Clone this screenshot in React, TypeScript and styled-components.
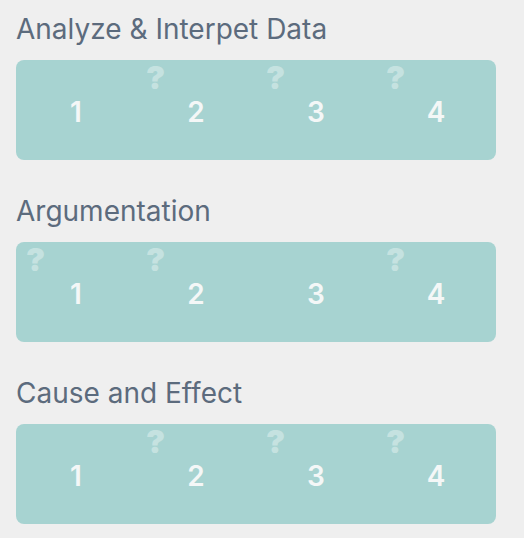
import React from "react"
import styled, {createGlobalStyle} from "styled-components"

const GlobalStyle = createGlobalStyle`
    html, body {
        margin: 0;
        padding: 0;
        background: #efefef;
    }
    body {
        font-family: Inter, "Liberation Sans", Arial, sans-serif;
    }
`

const Page = styled.div`
    display: flex;
    flex-direction: column;
    gap: 35px;
    padding: 13px 28px 0 16px;
`

const Section = styled.section`
    display: flex;
    flex-direction: column;
    gap: 15px;
`

const Title = styled.h2`
    margin: 0;
    font-size: 28px;
    line-height: 32px;
    font-weight: 400;
    color: #5c6b7d;
`

const Scale = styled.div`
    display: grid;
    grid-template-columns: repeat(4, 1fr);
    height: 100px;
    border-radius: 8px;
    background: #a7d3d1;
`

const Step = styled.div`
    position: relative;
    display: flex;
    align-items: center;
    justify-content: center;
`

const Number = styled.span`
    margin-top: 4px;
    font-size: 28px;
    line-height: 28px;
    font-weight: 600;
    color: #f4f7f7;
`

const Unknown = styled.span`
    position: absolute;
    top: 2px;
    left: 10px;
    font-size: 32px;
    line-height: 32px;
    font-weight: 900;
    color: rgba(255, 255, 255, 0.35);
`

interface Rubric {
    title: string
    unknown: boolean[]
}

const rubrics: Rubric[] = [
    {title: "Analyze & Interpet Data", unknown: [false, true, true, true]},
    {title: "Argumentation", unknown: [true, true, false, true]},
    {title: "Cause and Effect", unknown: [false, true, true, true]},
]

const App: React.FC = () => (
    <>
        <GlobalStyle />
        <Page>
            {rubrics.map(rubric => (
                <Section key={rubric.title}>
                    <Title>{rubric.title}</Title>
                    <Scale>
                        {rubric.unknown.map((unknown, i) => (
                            <Step key={i}>
                                {unknown && <Unknown>?</Unknown>}
                                <Number>{i + 1}</Number>
                            </Step>
                        ))}
                    </Scale>
                </Section>
            ))}
        </Page>
    </>
)

export default App
